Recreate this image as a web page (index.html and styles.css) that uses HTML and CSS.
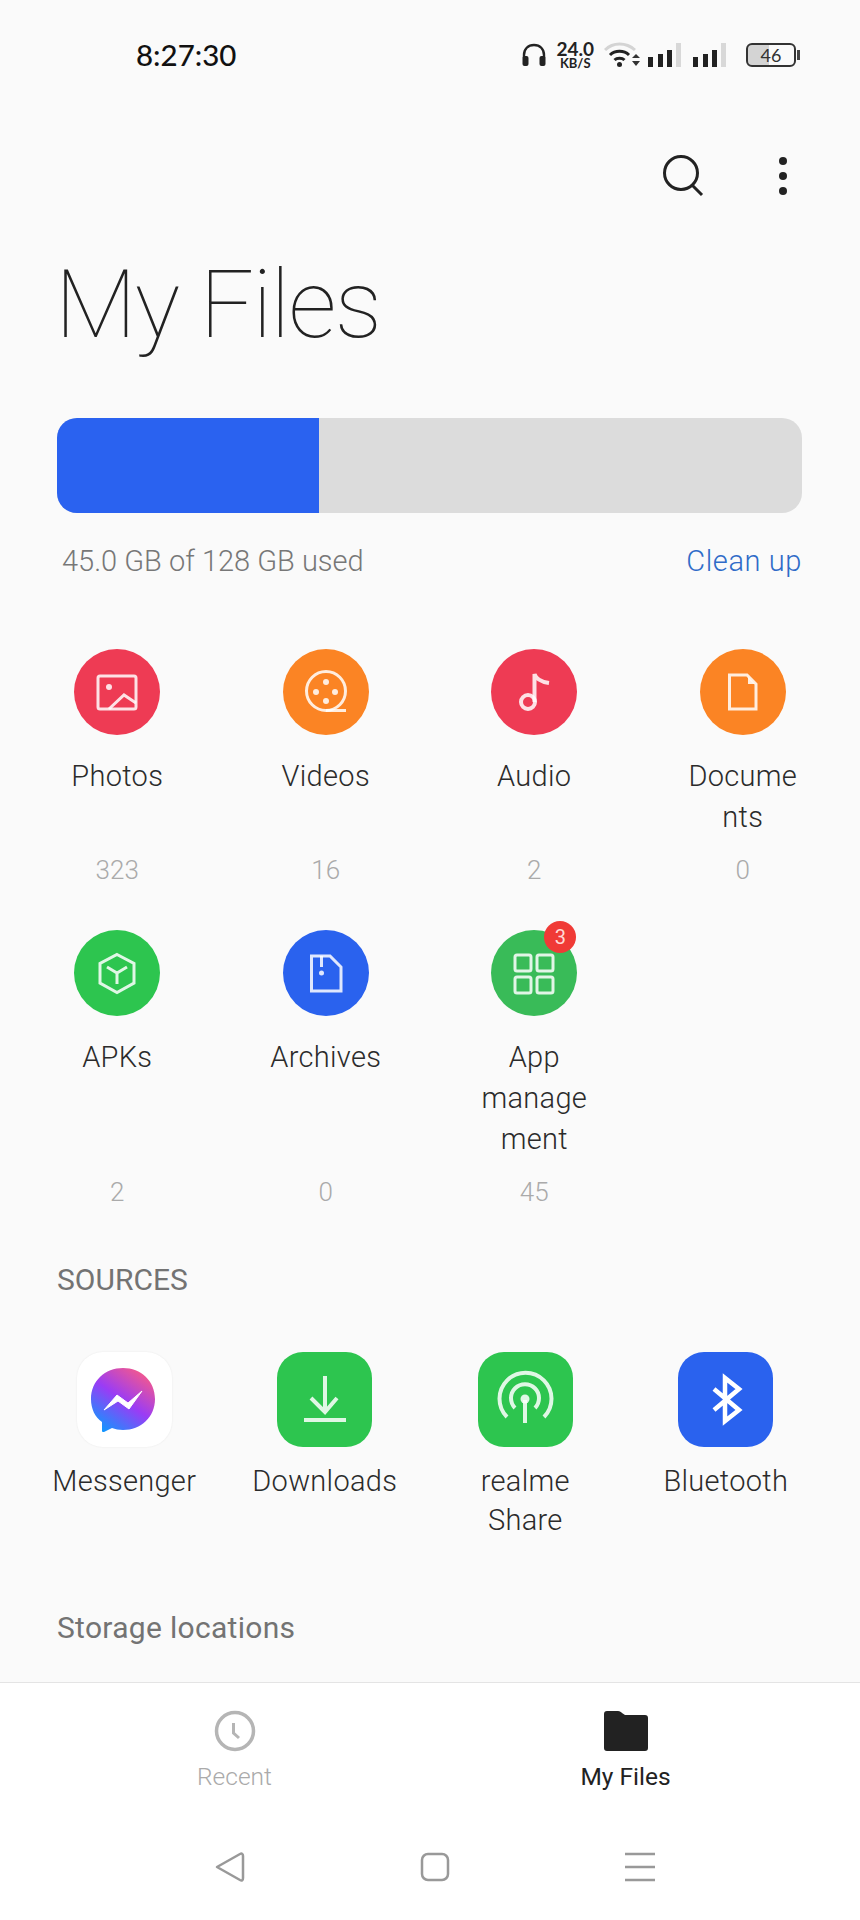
FILE: index.html
```html
<!DOCTYPE html>
<html lang="en">

<head>
    <meta charset="UTF-8">
    <title>My Files</title>
    <link rel="stylesheet" href="styles.css">
</head>

<body>
    <div class="page">
        <div class="status-bar">
            <span class="time">8:27:30</span>
            <div class="status-icons">
                <svg class="headphones" width="24" height="24" viewBox="0 0 24 24">
                    <path d="M2 15V12C2 6 6 2 12 2S22 6 22 12V15" fill="none" stroke="#222" stroke-width="2.4" />
                    <rect x="0.5" y="13" width="6" height="10" rx="2" fill="#222" />
                    <rect x="17.5" y="13" width="6" height="10" rx="2" fill="#222" />
                </svg>
                <div class="speed">
                    <span class="speed-value">24.0</span>
                    <span class="speed-unit">KB/S</span>
                </div>
                <svg class="wifi" width="37" height="26" viewBox="0 0 37 26">
                    <path d="M1 8C9 0 22 0 31 8" fill="none" stroke="#d4d4d4" stroke-width="3" />
                    <path d="M6 13C11 8 20 8 25 13" fill="none" stroke="#222" stroke-width="3" />
                    <path d="M10.500 18C13 15.500 18 15.500 20.500 18" fill="none" stroke="#222" stroke-width="3" />
                    <circle cx="15.500" cy="22.500" r="2.500" fill="#222" />
                    <path d="M28 16L32 12L36 16ZM28 19L32 24L36 19Z" fill="#333" />
                </svg>
                <svg class="signal" width="33" height="24" viewBox="0 0 33 24">
                    <rect x="0" y="14" width="5" height="10" fill="#222" />
                    <rect x="10" y="11" width="5" height="13" fill="#222" />
                    <rect x="19" y="7" width="5" height="17" fill="#222" />
                    <rect x="28" y="0" width="5" height="24" fill="#d8d8d8" />
                </svg>
                <svg class="signal" width="33" height="24" viewBox="0 0 33 24">
                    <rect x="0" y="14" width="5" height="10" fill="#222" />
                    <rect x="10" y="11" width="5" height="13" fill="#222" />
                    <rect x="19" y="7" width="5" height="17" fill="#222" />
                    <rect x="28" y="0" width="5" height="24" fill="#d8d8d8" />
                </svg>
                <div class="battery"><span>46</span></div>
                <div class="battery-nib"></div>
            </div>
        </div>

        <div class="toolbar">
            <svg class="search" width="42" height="42" viewBox="0 0 42 42">
                <circle cx="19" cy="18" r="16.500" fill="none" stroke="#222" stroke-width="3" />
                <path d="M30 30L40 40" stroke="#222" stroke-width="3" />
            </svg>
            <div class="more">
                <i></i><i></i><i></i>
            </div>
        </div>

        <h1 class="title">My Files</h1>

        <div class="storage-bar">
            <div class="storage-used"></div>
        </div>
        <div class="usage">
            <span>45.0 GB of 128 GB used</span>
            <span class="clean-up">Clean up</span>
        </div>

        <div class="categories">
            <div class="category">
                <svg class="circle red" viewBox="0 0 86 86">
                    <rect x="24" y="27" width="38" height="33" rx="2" class="line" />
                    <circle cx="35" cy="38" r="3" class="fill" />
                    <path d="M35 60L50 46L62 54" class="line" />
                </svg>
                <div class="label">Photos</div>
                <div class="count">323</div>
            </div>
            <div class="category">
                <svg class="circle orange" viewBox="0 0 86 86">
                    <circle cx="43" cy="42" r="19.500" class="line" />
                    <path d="M43 61.500H63" class="line" />
                    <circle cx="43" cy="33" r="3" class="fill" />
                    <circle cx="33" cy="43" r="3" class="fill" />
                    <circle cx="52" cy="43" r="3" class="fill" />
                    <circle cx="43" cy="52" r="3" class="fill" />
                </svg>
                <div class="label">Videos</div>
                <div class="count">16</div>
            </div>
            <div class="category">
                <svg class="circle red" viewBox="0 0 86 86">
                    <circle cx="37" cy="53" r="7" class="line thick" />
                    <path d="M43.500 53V25C45 30 51 33 58 34" class="line thick" />
                </svg>
                <div class="label">Audio</div>
                <div class="count">2</div>
            </div>
            <div class="category">
                <svg class="circle orange" viewBox="0 0 86 86">
                    <path d="M29.500 26H47L56 35V60H29.500Z" class="line" />
                    <path d="M48 28V35H55Z" class="fill" />
                </svg>
                <div class="label">Docume<br>nts</div>
                <div class="count">0</div>
            </div>
            <div class="category">
                <svg class="circle green" viewBox="0 0 86 86">
                    <path d="M43 24.500L60 33.500V53L43 62.500L26 53V33.500Z" class="line" />
                    <path d="M33 37L43 43L53 37M43 43V54" class="line" />
                </svg>
                <div class="label">APKs</div>
                <div class="count">2</div>
            </div>
            <div class="category">
                <svg class="circle blue" viewBox="0 0 86 86">
                    <path d="M28.500 26H47L58 37V61H28.500Z" class="line" />
                    <path d="M38.500 26V37" class="line" />
                    <circle cx="38.500" cy="43" r="2.500" class="fill" />
                </svg>
                <div class="label">Archives</div>
                <div class="count">0</div>
            </div>
            <div class="category">
                <div class="icon-wrap">
                    <svg class="circle app-green" viewBox="0 0 86 86">
                        <rect x="24" y="25" width="16" height="16" rx="2" class="line" />
                        <rect x="46" y="25" width="16" height="16" rx="2" class="line" />
                        <rect x="24" y="47" width="16" height="16" rx="2" class="line" />
                        <rect x="46" y="47" width="16" height="16" rx="2" class="line" />
                    </svg>
                    <span class="badge">3</span>
                </div>
                <div class="label">App<br>manage<br>ment</div>
                <div class="count">45</div>
            </div>
        </div>

        <h2 class="section-title sources-title">SOURCES</h2>

        <div class="sources">
            <div class="source">
                <svg class="tile white" viewBox="0 0 95 95">
                    <defs>
                        <linearGradient id="messenger" x1="0.150" y1="1" x2="0.850" y2="0">
                            <stop offset="0" stop-color="#0a9bff" />
                            <stop offset="0.500" stop-color="#9a3cf5" />
                            <stop offset="1" stop-color="#ff5c80" />
                        </linearGradient>
                    </defs>
                    <path d="M46 16C28 16 14 29 14 47C14 57 18 65 25 70V79C25 80 26 80 27 80L35 76C38 77 42 78 46 78C64 78 78 65 78 47C78 29 64 16 46 16Z" fill="url(#messenger)" />
                    <path d="M27 58L40 43L51 51L65 39L52 57L41 49Z" fill="#fff" stroke="#fff" stroke-width="1" stroke-linejoin="round" />
                </svg>
                <div class="label">Messenger</div>
            </div>
            <div class="source">
                <svg class="tile green" viewBox="0 0 95 95">
                    <path d="M48 24V59M34 46L48 60L60 46M27 68H69" class="line thick" />
                </svg>
                <div class="label">Downloads</div>
            </div>
            <div class="source">
                <svg class="tile green" viewBox="0 0 95 95">
                    <path d="M29 65A26 26 0 1 1 66 65" class="line thick" />
                    <path d="M37 56A14 14 0 1 1 57 56" class="line thick" />
                    <circle cx="47" cy="47" r="4.500" class="fill" />
                    <path d="M47 48V71" class="line thick" />
                </svg>
                <div class="label">realme<br>Share</div>
            </div>
            <div class="source">
                <svg class="tile blue" viewBox="0 0 95 95">
                    <path d="M36 37L61 58L47 69V26L61 37L36 58" class="line bold" />
                </svg>
                <div class="label">Bluetooth</div>
            </div>
        </div>

        <h2 class="section-title storage-title">Storage locations</h2>

        <div class="bottom">
            <div class="tabs">
                <div class="tab">
                    <svg width="42" height="42" viewBox="0 0 42 42">
                        <circle cx="21" cy="21" r="18.500" fill="none" stroke="#b5b5b5" stroke-width="3.500" />
                        <path d="M19.500 13V23L25 28" fill="none" stroke="#b5b5b5" stroke-width="3" />
                    </svg>
                    <span class="tab-label muted">Recent</span>
                </div>
                <div class="tab">
                    <svg width="44" height="42" viewBox="0 0 44 42">
                        <path d="M3 1H14C16 1 17 2 18 3L21 5H41C43 5 44 6 44 8V38C44 40 43 41 41 41H3C1 41 0 40 0 38V4C0 2 1 1 3 1Z" fill="#222" />
                    </svg>
                    <span class="tab-label">My Files</span>
                </div>
            </div>
            <div class="nav-buttons">
                <svg width="30" height="30" viewBox="0 0 30 30">
                    <path d="M2 15L25 2C27 1 28 2 28 4V26C28 28 27 29 25 28Z" fill="none" stroke="#999" stroke-width="2.500" stroke-linejoin="round" />
                </svg>
                <svg width="30" height="30" viewBox="0 0 30 30">
                    <rect x="2" y="2" width="26" height="26" rx="6" fill="none" stroke="#999" stroke-width="2.500" />
                </svg>
                <svg width="30" height="30" viewBox="0 0 30 30">
                    <path d="M0 2H30M0 15H30M0 28H30" stroke="#999" stroke-width="2.500" />
                </svg>
            </div>
        </div>
    </div>
</body>

</html>
```

FILE: styles.css
```css
* {
    box-sizing: border-box;
}

body {
    margin: 0;
    background: #fafafa;
    font-family: Roboto, sans-serif;
    color: #2b2b2b;
}

.page {
    display: flex;
    flex-direction: column;
    height: 1920px;
    overflow: hidden;
}

.status-bar {
    display: flex;
    align-items: center;
    justify-content: space-between;
    height: 109px;
    padding: 0 60px 0 136px;
}

.time {
    font-family: Lato, sans-serif;
    font-size: 29.5px;
    font-weight: 500;
    color: #111;
}

.status-icons {
    display: flex;
    align-items: center;
}

.speed {
    display: flex;
    flex-direction: column;
    align-items: center;
    margin: 0 10px;
    font-family: Lato, sans-serif;
    color: #222;
}

.speed-value {
    font-size: 19px;
    font-weight: 700;
    line-height: 15px;
}

.speed-unit {
    margin-top: 1px;
    font-size: 13px;
    font-weight: 700;
    line-height: 12px;
}

.wifi {
    margin-right: 7px;
}

.signal {
    margin-right: 12px;
}

.signal + .signal {
    margin-right: 20px;
}

.battery {
    width: 50px;
    height: 24px;
    border: 2px solid #333;
    border-radius: 6px;
    background: linear-gradient(90deg, #d4d4d4 46%, transparent 46%);
    font-family: Lato, sans-serif;
    font-size: 18px;
    line-height: 20px;
    text-align: center;
    color: #333;
}

.battery-nib {
    width: 3px;
    height: 10px;
    margin-left: 1px;
    background: #444;
}

.toolbar {
    display: flex;
    align-items: center;
    justify-content: flex-end;
    height: 133px;
    padding-right: 73px;
}

.search {
    margin-right: 75px;
}

.more {
    display: flex;
    flex-direction: column;
    gap: 7px;
}

.more i {
    display: block;
    width: 8px;
    height: 8px;
    border-radius: 50%;
    background: #222;
}

.title {
    margin: 0;
    padding-left: 55px;
    font-size: 95px;
    font-weight: 100;
    line-height: 126px;
    letter-spacing: -1.6px;
    color: #222;
}

.storage-bar {
    height: 95px;
    margin: 50px 58px 0 57px;
    border-radius: 20px;
    background: #dcdcdc;
    overflow: hidden;
}

.storage-used {
    width: 262px;
    height: 100%;
    background: #2a62f0;
}

.usage {
    display: flex;
    justify-content: space-between;
    margin: 30px 58px 0 62px;
    font-size: 29px;
    font-weight: 300;
    line-height: 36px;
    color: #777;
}

.clean-up {
    letter-spacing: 0.6px;
    color: #2f6bc8;
}

.categories {
    display: grid;
    grid-template-columns: repeat(4, 208.500px);
    row-gap: 42px;
    margin: 70px 0 0 13px;
}

.category {
    display: flex;
    flex-direction: column;
    align-items: center;
}

.circle {
    display: block;
    width: 86px;
    height: 86px;
    border-radius: 50%;
}

.icon-wrap {
    position: relative;
}

.badge {
    position: absolute;
    top: -9px;
    right: 1px;
    width: 32px;
    height: 32px;
    border-radius: 50%;
    background: #f03a36;
    font-size: 20px;
    line-height: 32px;
    text-align: center;
    color: #ffd9d6;
}

.red {
    background: #ee3b54;
}

.orange {
    background: #fb8424;
}

.green {
    background: #2dc54f;
}

.app-green {
    background: #39bb58;
}

.blue {
    background: #2a62ee;
}

.white {
    background: #fff;
    box-shadow: 0 0 2px rgba(0, 0, 0, 0.08);
}

.line {
    fill: none;
    stroke: rgba(255, 255, 255, 0.85);
    stroke-width: 3;
}

.thick {
    stroke-width: 4;
}

.bold {
    stroke: #fff;
    stroke-width: 4.5;
}

.fill {
    fill: rgba(255, 255, 255, 0.85);
}

.label {
    margin-top: 21px;
    font-size: 29px;
    font-weight: 300;
    line-height: 41px;
    letter-spacing: 0.3px;
    text-align: center;
}

.count {
    margin-top: auto;
    padding-top: 14px;
    font-size: 26px;
    font-weight: 300;
    line-height: 36px;
    color: #aaa;
}

.section-title {
    margin: 0;
    padding-left: 57px;
    font-size: 30px;
    font-weight: 400;
    line-height: 36px;
    color: #737373;
}

.sources-title {
    margin-top: 52px;
}

.sources {
    display: grid;
    grid-template-columns: repeat(4, 200.500px);
    margin: 54px 0 0 24px;
}

.source {
    display: flex;
    flex-direction: column;
    align-items: center;
}

.tile {
    display: block;
    width: 95px;
    height: 95px;
    border-radius: 26px;
}

.source .label {
    margin-top: 15px;
    line-height: 39px;
}

.storage-title {
    margin-top: 70px;
    letter-spacing: 0.3px;
}

.bottom {
    margin-top: auto;
    height: 238px;
    border-top: 1px solid #e4e4e4;
    background: #fff;
}

.tabs {
    display: grid;
    grid-template-columns: 1fr 1fr;
    padding: 27px 39px 0;
}

.tab {
    display: flex;
    flex-direction: column;
    align-items: center;
}

.tab-label {
    margin-top: 9px;
    font-size: 24.5px;
    line-height: 32px;
    color: #222;
}

.muted {
    font-weight: 300;
    color: #aaa;
}

.nav-buttons {
    display: flex;
    justify-content: center;
    gap: 175px;
    margin: 59px 0 0 10px;
}
```
